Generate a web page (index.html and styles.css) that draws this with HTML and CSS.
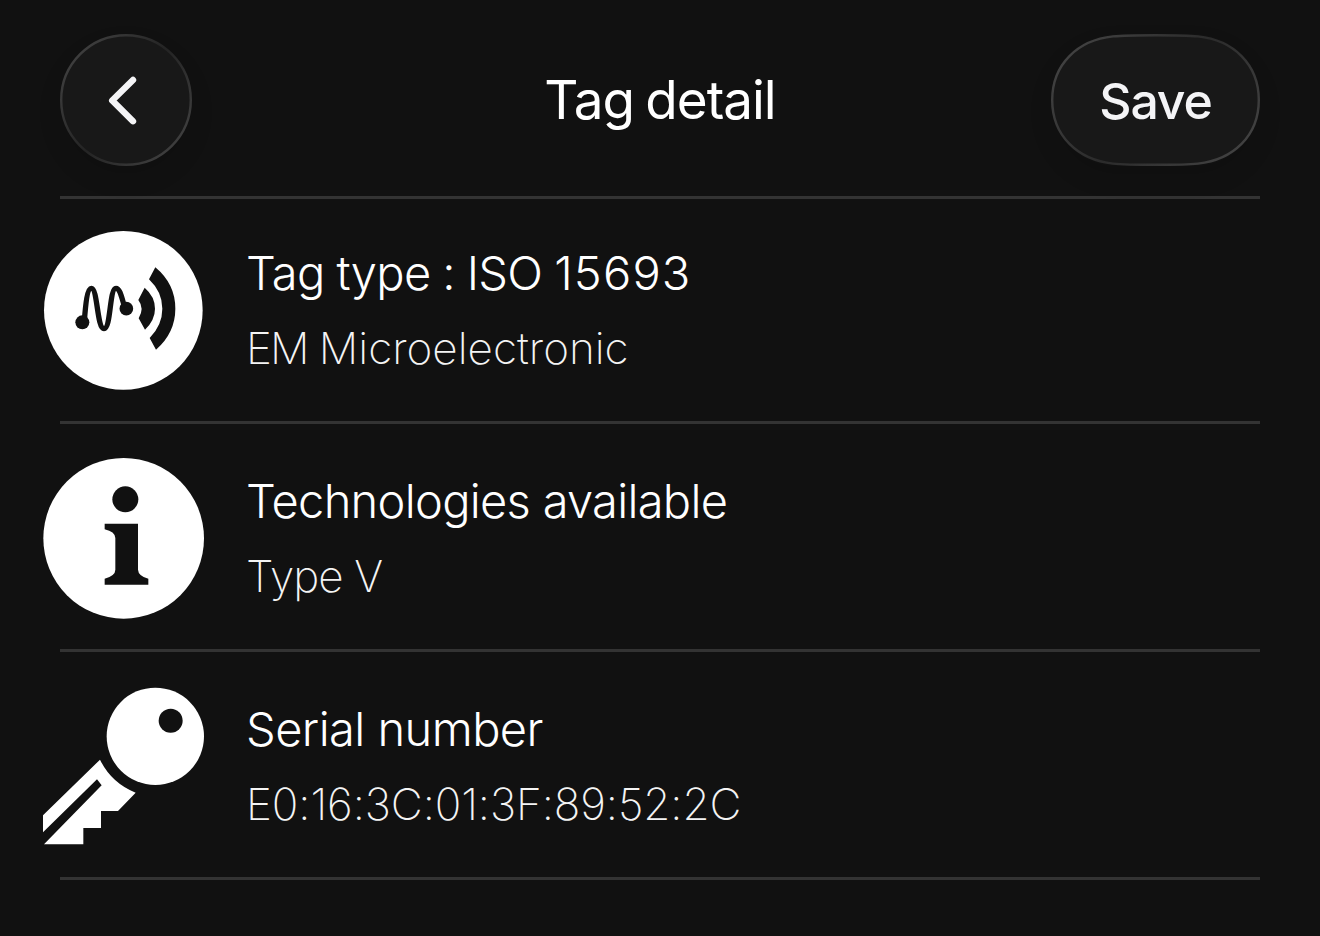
FILE: index.html
```html
<!DOCTYPE html>
<html lang="en">
<head>
<meta charset="utf-8">
<title>Tag detail</title>
<link rel="stylesheet" href="styles.css">
</head>
<body>
<main class="screen">
  <header class="header">
    <button class="btn btn-back" aria-label="Back">
      <svg class="btn-shape" viewBox="0 0 132 132">
        <defs>
          <linearGradient id="rimBack" x1="0" y1="0.1" x2="1" y2="0.9">
            <stop offset="0" stop-color="#444"/><stop offset="0.5" stop-color="#242424"/><stop offset="1" stop-color="#444"/>
          </linearGradient>
        </defs>
        <circle cx="66" cy="66" r="64.8" fill="#181818" stroke="url(#rimBack)" stroke-width="2.4"/>
        <path d="M73 46 L52.2 66.5 L73 87.2" fill="none" stroke="#f4f4f6" stroke-width="6.4" stroke-linecap="round" stroke-linejoin="round"/>
      </svg>
    </button>
    <h1 class="title">Tag detail</h1>
    <button class="btn btn-save">
      <svg class="btn-shape" viewBox="0 0 209 132">
        <defs>
          <linearGradient id="rimSave" gradientUnits="userSpaceOnUse" x1="30" y1="0" x2="179" y2="132">
            <stop offset="0" stop-color="#424242"/><stop offset="0.5" stop-color="#2b2b2b"/><stop offset="1" stop-color="#424242"/>
          </linearGradient>
        </defs>
        <path d="M1.2 66 C1.2 30 27 6 62 2.4 C78 .8 131 .8 147 2.4 C182 6 207.8 30 207.8 66 C207.8 102 182 126 147 129.6 C131 131.2 78 131.2 62 129.6 C27 126 1.2 102 1.2 66Z" fill="#181818" stroke="url(#rimSave)" stroke-width="2.4"/>
      </svg>
      <span class="save-label">Save</span>
    </button>
  </header>

  <section class="list">
    <article class="row row-first">
      <svg class="icon" viewBox="39 30 483 483">
        <circle cx="280" cy="271" r="238" fill="#fff"/>
        <g fill="#111">
          <circle cx="157" cy="307" r="21"/>
          <circle cx="289" cy="266" r="20.5"/>
          <path d="M344 203 L325 240 Q344 265 326 295 L345 329 Q375 300 375 266 Q375 230 344 203Z"/>
          <path d="M376 142 L357 178 Q397 216 397 266 Q397 315 359 354 L378 389 Q436 338 436 266 Q436 192 376 142Z"/>
        </g>
        <path d="M163 303 C167 252 172 205 184 205 C203 205 201 326 222 326 C243 326 238 205 258 205 C270 205 275 232 284 262" fill="none" stroke="#111" stroke-width="16"/>
      </svg>
      <div class="text">
        <h2 class="label l-type">Tag type : ISO <span class="digits">15693</span></h2>
        <p class="value v-type"><span class="caps">EM</span> Microelectronic</p>
      </div>
    </article>

    <article class="row">
      <svg class="icon" viewBox="39 24 483 483">
        <circle cx="281" cy="265" r="241" fill="#fff"/>
        <circle cx="286" cy="148" r="39" fill="#111"/>
        <path d="M224 221 H324 V359 Q325 378 355 386 V404 H224 V386 Q256 377 256 359 V264 Q255 245 224 238Z" fill="#111"/>
      </svg>
      <div class="text">
        <h2 class="label l-tech">Technologies available</h2>
        <p class="value v-tech">Type V</p>
      </div>
    </article>

    <article class="row row-last">
      <svg class="icon" viewBox="39 36 483 483">
        <circle cx="376" cy="184" r="146" fill="#fff"/>
        <circle cx="422" cy="137" r="36" fill="#111"/>
        <path d="M210 254 Q244 324 317 353 L264 408 H213 V459 H160 V508 H42 L215 331 L201 313 L39 472 V421Z" fill="#fff"/>
      </svg>
      <div class="text">
        <h2 class="label l-serial">Serial number</h2>
        <p class="value v-serial">E0:16:3C:01:3F:89:52:2C</p>
      </div>
    </article>
  </section>
</main>
</body>
</html>
```
FILE: styles.css
```css
* { box-sizing: border-box; }

body {
  margin: 0;
  background: #111;
  color: #fff;
  font-family: Inter, "Liberation Sans", sans-serif;
}

.screen { height: 936px; padding: 0 60px; overflow: hidden; }

.header {
  display: grid;
  grid-template-columns: 209px 1fr 209px;
  align-items: start;
  height: 199px;
  padding-top: 34px;
  border-bottom: 3px solid #333;
}

.btn {
  position: relative;
  display: flex;
  align-items: center;
  justify-content: center;
  height: 132px;
  padding: 0;
  border: 0;
  border-radius: 66px;
  background: none;
  box-shadow: 0 12px 24px rgba(0, 0, 0, .1);
  color: #f4f4f6;
  font: inherit;
}
.btn-back { width: 132px; }
.btn-save { width: 209px; }
.btn-shape { position: absolute; inset: 0; width: 100%; height: 100%; }

.save-label {
  position: relative;
  font-size: 50px;
  font-weight: 500;
  line-height: 132px;
  letter-spacing: -1.2px;
  padding-top: 1px;
}

.title {
  margin: 0;
  text-align: center;
  font-size: 53px;
  font-weight: 400;
  line-height: 132px;
  letter-spacing: -1px;
  word-spacing: -2.5px;
  white-space: nowrap;
}

.row {
  display: flex;
  gap: 42px;
  height: 228px;
  padding-top: 34px;
  border-bottom: 3px solid #333;
}
.row-first { height: 225px; padding-top: 31px; }
.row-last { padding-top: 35px; }

.icon { flex: none; width: 161px; height: 161px; margin-left: -17px; }

.text { padding-top: 5px; white-space: nowrap; }
.row-last .text { padding-top: 4px; }

.label, .value { margin: 0; }
.label { font-size: 47px; font-weight: 300; line-height: 75px; }
.value { padding-top: 1px; font-size: 44px; font-weight: 200; line-height: 74px; color: #f4f4f4; }

.l-type { letter-spacing: -.65px; word-spacing: -.8px; }
.digits { letter-spacing: 1.2px; }
.l-tech { letter-spacing: -.7px; }
.l-serial { letter-spacing: -.55px; }
.v-type { letter-spacing: 0; word-spacing: -1px; }
.caps { letter-spacing: -2px; }
.v-tech { letter-spacing: -.9px; }
.v-serial { letter-spacing: -.08px; }
```
